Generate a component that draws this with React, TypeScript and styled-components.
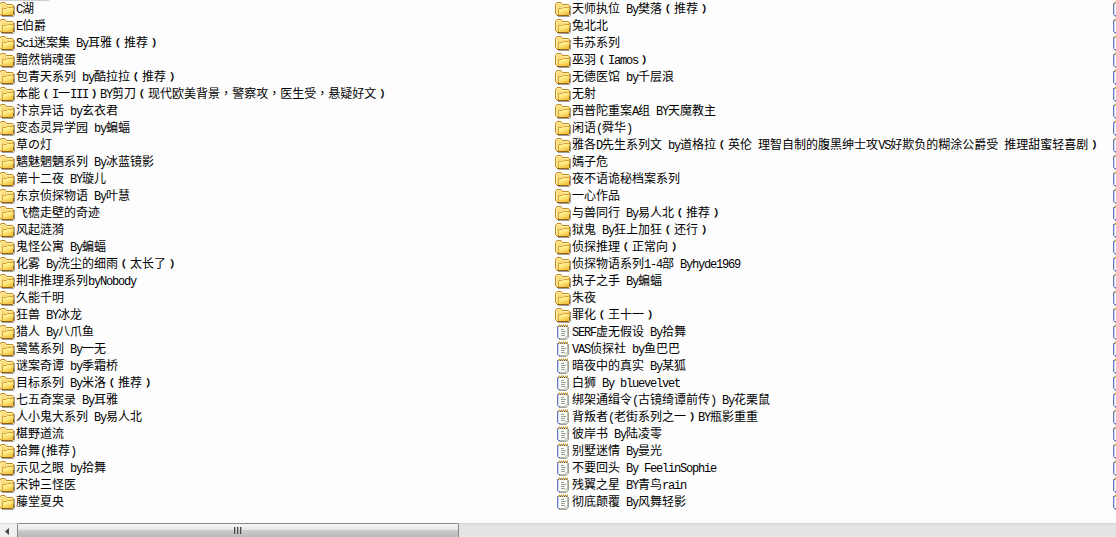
import styled, { createGlobalStyle } from "styled-components";

const PageStyle = createGlobalStyle`
    html, body {
        margin: 0;
        padding: 0;
        overflow: hidden;
        background-color: #fdfdfd;
    }
`;

//whole explorer pane, list on top and scrollbar at the bottom
const Pane = styled.div`
    display: flex;
    flex-direction: column;
    width: 1116px;
    height: 537px;
    overflow: hidden;
    background-color: #fdfdfd;
`;

//leftover of the header above the list
const HeaderEdge = styled.div`
    flex: none;
    width: 49px;
    height: 1px;
    background-color: #cfcfcf;
`;

const Columns = styled.div`
    flex: 1;
    display: flex;
    min-height: 0;
    margin-left: -1px;
`;

const Column = styled.div`
    flex: none;
    display: flex;
    flex-direction: column;
    width: 556px;
`;

const Row = styled.div`
    flex: none;
    display: flex;
    align-items: flex-start;
    gap: 1px;
    height: 17px;
`;

const IconBox = styled.svg`
    flex: none;
    display: block;
    width: 16px;
    height: 16px;
`;

const Name = styled.span`
    display: block;
    height: 14px;
    font: 12px/14px "Noto Sans CJK SC", sans-serif;
    color: #000;
    white-space: pre;
`;

//half width letters, squeezed to 6px each
const Half = styled.span`
    font-family: "Liberation Mono", monospace;
    line-height: 0;
    letter-spacing: -1.2px;
`;

//full width brackets, moved to the middle of their 12px cell
const Bracket = styled.span<{ $open: boolean }>`
    font-size: 10px;
    font-weight: 900;
    line-height: 0;
    margin-left: ${(props) => props.$open ? "-2px" : "4px"};
    margin-right: ${(props) => props.$open ? "4px" : "-2px"};
`;

const Comma = styled.span`
    font-family: "Noto Sans CJK TC", sans-serif;
    line-height: 0;
`;

const ScrollBar = styled.div`
    flex: none;
    display: flex;
    height: 14px;
    background: linear-gradient(#d6d6d6 0, #e3e3e3 2px, #e6e6e6 100%);
`;

const ArrowButton = styled.div`
    display: flex;
    align-items: center;
    justify-content: center;
    width: 17px;
    height: 15px;
    background-color: #efefef;
    box-sizing: border-box;
    border-top: 1px solid #dcdcdc;
    padding-right: 3px;
`;

const Arrow = styled.svg`
    display: block;
    width: 4px;
    height: 7px;
`;

const Thumb = styled.div`
    display: flex;
    justify-content: center;
    align-items: center;
    box-sizing: border-box;
    width: 442px;
    height: 14px;
    border: 1px solid #8a8a8c;
    border-bottom: none;
    border-radius: 2px 2px 0 0;
    background: linear-gradient(#f6f6f6 0, #e6e6e8 6px, #cdcdcf 6px, #b9b9bd 100%);
`;

const Grip = styled.div`
    display: flex;
    gap: 1px;
`;

const GripLine = styled.div`
    width: 2px;
    height: 7px;
    background: linear-gradient(90deg, #4a4a4a 50%, #aaa 50%);
`;

type Kind = "folder" | "note";

const folderNames1: string[] = [
    "C湖",
    "E伯爵",
    "Sci迷案集 By耳雅（推荐）",
    "黯然销魂蛋",
    "包青天系列 by酷拉拉（推荐）",
    "本能（I一III）BY剪刀（现代欧美背景，警察攻，医生受，悬疑好文）",
    "汴京异话 by玄衣君",
    "变态灵异学园 by蝙蝠",
    "草の灯",
    "魑魅魍魉系列 By冰蓝镜影",
    "第十二夜 BY璇儿",
    "东京侦探物语 By叶慧",
    "飞檐走壁的奇迹",
    "风起涟漪",
    "鬼怪公寓 By蝙蝠",
    "化雾 By洗尘的细雨（太长了）",
    "荆非推理系列byNobody",
    "久能千明",
    "狂兽 BY冰龙",
    "猎人 By八爪鱼",
    "鹭鸶系列 By一无",
    "谜案奇谭 by季霜桥",
    "目标系列 By米洛（推荐）",
    "七五奇案录 By耳雅",
    "人小鬼大系列 By易人北",
    "椹野道流",
    "拾舞(推荐)",
    "示见之眼 by拾舞",
    "宋钟三怪医",
    "藤堂夏央",
];

const folderNames2: string[] = [
    "天师执位 By樊落（推荐）",
    "兔北北",
    "韦苏系列",
    "巫羽（Iamos）",
    "无德医馆 by千层浪",
    "无射",
    "西普陀重案A组 BY天魔教主",
    "闲语(舜华)",
    "雅各D先生系列文 by道格拉（英伦 理智自制的腹黑绅士攻VS好欺负的糊涂公爵受 推理甜蜜轻喜剧）",
    "嫣子危",
    "夜不语诡秘档案系列",
    "一心作品",
    "与兽同行 By易人北（推荐）",
    "狱鬼 By狂上加狂（还行）",
    "侦探推理（正常向）",
    "侦探物语系列1-4部 Byhyde1969",
    "执子之手 By蝙蝠",
    "朱夜",
    "罪化（王十一）",
];

const noteNames: string[] = [
    "SERF虚无假设 By拾舞",
    "VAS侦探社 by鱼巴巴",
    "暗夜中的真实 By某狐",
    "白狮 By bluevelvet",
    "绑架通缉令(古镜绮谭前传) By花栗鼠",
    "背叛者(老街系列之一）BY瓶影重重",
    "彼岸书 By陆凌零",
    "别墅迷情 By曼光",
    "不要回头 By FeelinSophie",
    "残翼之星 BY青鸟rain",
    "彻底颠覆 By风舞轻影",
];

function FolderIcon() {
    return (
        <IconBox viewBox="0 0 16 16">
            <defs>
                <linearGradient id="front" x1="0" y1="0" x2="0.5" y2="1">
                    <stop offset="0" stopColor="#fff9b4" />
                    <stop offset="0.5" stopColor="#ffe97e" />
                    <stop offset="1" stopColor="#f0be3c" />
                </linearGradient>
            </defs>
            <path d="M3 15.5H14.5L15.5 14.5V5" fill="none" stroke="#85858b" strokeOpacity="0.8" />
            <path d="M0.5 12.5V3.5L2 1.5H6L7.5 3.5H13.5L14.5 4.5V13.5L13.5 14.5H2.5Z" fill="#fbdc7c" stroke="#bf8a25" />
            <path d="M1.5 12V4L2.5 2.5H5.5L7 4.5H13" fill="none" stroke="#fff0a4" />
            <path d="M3.5 14.5V7.5H7.5L8.5 6.5H14.5V13.5L13.5 14.5Z" fill="url(#front)" stroke="#d6a540" />
            <path d="M2 14.5H13.5L14.5 13.5V10" fill="none" stroke="#94640f" />
        </IconBox>
    );
}

function NoteIcon() {
    return (
        <IconBox viewBox="0 0 16 16">
            <path d="M4 15.5H11.5L13.5 13.5V3" fill="none" stroke="#a3a297" />
            <path d="M3.5 1.5H12.5V13L11 14.5H3.5L2.5 13.5V2.5Z" fill="#fbfcf6" stroke="#b9bcb4" />
            <path d="M2.5 2.5V13.5L3.5 14.5H5" fill="none" stroke="#6e74c4" />
            <path d="M3.5 3.5V13.5" stroke="#c3def0" />
            <path d="M4 1.5H13" stroke="#d0a028" strokeWidth="2" strokeDasharray="1 1" />
            <path d="M3 2.5H12" stroke="#6b5a50" strokeDasharray="1 1" />
            <path d="M6 5.5H9M6 7.5H11M6 9.5H10M6 11.5H10" stroke="#98a29c" />
            <path d="M10.5 14V12.5H12" fill="none" stroke="#cfcfc2" />
        </IconBox>
    );
}

//splits a name into half width runs, marks and plain chinese text
function FileName(props: { text: string }) {
    const parts = props.text.match(/[\x20-\x7e]+|[（），]|[^\x20-\x7e（），]+/g) || [];
    return (
        <Name>
            {parts.map((part, i) =>
                /^[\x20-\x7e]/.test(part) ? <Half key={i}>{part}</Half> :
                part === "，" ? <Comma key={i} lang="zh-TW">{part}</Comma> :
                part === "（" || part === "）" ? <Bracket key={i} $open={part === "（"}>{part}</Bracket> : part
            )}
        </Name>
    );
}

function FileRow(props: { kind: Kind; text?: string }) {
    return (
        <Row>
            {props.kind === "folder" ? <FolderIcon /> : <NoteIcon />}
            {props.text && <FileName text={props.text} />}
        </Row>
    );
}

export default function App() {
    return (
        <Pane>
            <PageStyle />
            <HeaderEdge />
            <Columns>
                <Column>
                    {folderNames1.map((name) => <FileRow key={name} kind="folder" text={name} />)}
                </Column>
                <Column>
                    {folderNames2.map((name) => <FileRow key={name} kind="folder" text={name} />)}
                    {noteNames.map((name) => <FileRow key={name} kind="note" text={name} />)}
                </Column>
                <Column>
                    {Array.from({ length: 30 }, (_, i) => <FileRow key={i} kind="note" />)}
                </Column>
            </Columns>
            <ScrollBar>
                <ArrowButton>
                    <Arrow viewBox="0 0 4 7">
                        <path d="M4 0V7L0 3.5Z" fill="#444" />
                    </Arrow>
                </ArrowButton>
                <Thumb>
                    <Grip>
                        <GripLine />
                        <GripLine />
                        <GripLine />
                    </Grip>
                </Thumb>
            </ScrollBar>
        </Pane>
    );
}
